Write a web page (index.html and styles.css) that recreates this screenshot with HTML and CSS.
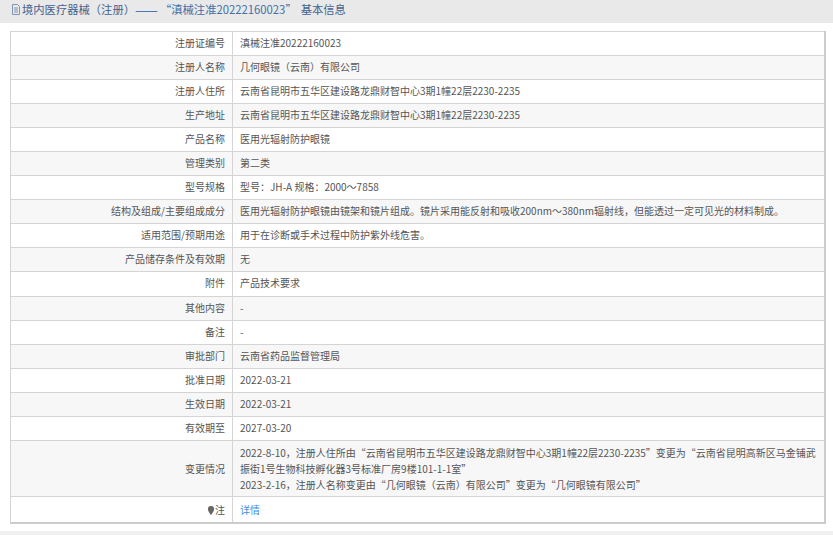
FILE: index.html
```html
<!DOCTYPE html>
<html lang="zh">
<head>
<meta charset="utf-8">
<title>基本信息</title>
<link rel="stylesheet" href="styles.css">
</head>
<body>
<header class="head">
  <svg class="doc" width="10" height="11" viewBox="0 0 10 11"><path d="M1.500.5h5l2 2v8h-7zM3 4h4M3 6h4M3 8h4" fill="none" stroke="#7f95b5"/></svg>
  <span>境内医疗器械（注册）</span>
  <span class="dash">——</span>
  <span class="num">“滇械注准20222160023”</span>
  <span>基本信息</span>
</header>
<main class="wrap">
<table class="info">
  <tr><th>注册证编号</th><td>滇械注准20222160023</td></tr>
  <tr class="alt"><th>注册人名称</th><td>几何眼镜（云南）有限公司</td></tr>
  <tr><th>注册人住所</th><td>云南省昆明市五华区建设路龙鼎财智中心3期1幢22层2230-2235</td></tr>
  <tr class="alt"><th>生产地址</th><td>云南省昆明市五华区建设路龙鼎财智中心3期1幢22层2230-2235</td></tr>
  <tr><th>产品名称</th><td>医用光辐射防护眼镜</td></tr>
  <tr class="alt"><th>管理类别</th><td>第二类</td></tr>
  <tr><th>型号规格</th><td>型号：JH-A 规格：2000～7858</td></tr>
  <tr class="alt"><th>结构及组成/主要组成成分</th><td>医用光辐射防护眼镜由镜架和镜片组成。镜片采用能反射和吸收200nm～380nm辐射线，但能透过一定可见光的材料制成。</td></tr>
  <tr><th>适用范围/预期用途</th><td>用于在诊断或手术过程中防护紫外线危害。</td></tr>
  <tr class="alt"><th>产品储存条件及有效期</th><td>无</td></tr>
  <tr class="tall"><th>附件</th><td>产品技术要求</td></tr>
  <tr class="alt"><th>其他内容</th><td>-</td></tr>
  <tr><th>备注</th><td>-</td></tr>
  <tr class="alt"><th>审批部门</th><td>云南省药品监督管理局</td></tr>
  <tr><th>批准日期</th><td>2022-03-21</td></tr>
  <tr class="alt"><th>生效日期</th><td>2022-03-21</td></tr>
  <tr><th>有效期至</th><td>2027-03-20</td></tr>
  <tr class="alt multi"><th>变更情况</th><td>2022-8-10，注册人住所由“云南省昆明市五华区建设路龙鼎财智中心3期1幢22层2230-2235”变更为“云南省昆明高新区马金铺武振街1号生物科技孵化器3号标准厂房9楼101-1-1室”<br>2023-2-16，注册人名称变更由“几何眼镜（云南）有限公司”变更为“几何眼镜有限公司”</td></tr>
  <tr class="last"><th><svg class="pin" width="6" height="9" viewBox="0 0 6 9"><path d="M3 0a3 3 0 0 1 3 3.200C6 5.500 3 9 3 9S0 5.500 0 3.200A3 3 0 0 1 3 0z" fill="#666"/></svg>注</th><td><a class="link" href="#">详情</a></td></tr>
</table>
</main>
<div class="foot"></div>
</body>
</html>
```

FILE: styles.css
```css
html, body { margin: 0; padding: 0; background: #fff; }
body {
  width: 833px;
  height: 536px;
  overflow: hidden;
  font-family: "Noto Sans CJK SC", "Noto Sans", sans-serif;
  font-size: 10px;
  color: #555;
}
.head {
  display: flex;
  align-items: center;
  box-sizing: border-box;
  height: 23px;
  padding: 0 0 5px 11px;
  background: #e9e9e9;
  font-size: 11.300px;
  color: #41628f;
}
.doc { margin-right: 1px; }
.dash { margin-left: 0; font-size: 13.700px; color: #2a5ca8; }
.num { color: #3d6fa8; margin: 0 4px 0 2px; }
.wrap { padding: 8px 7px 0 10px; }
.info {
  width: 816px;
  border-collapse: collapse;
  table-layout: fixed;
  border: 1px solid #ccc;
  border-bottom-width: 2px;
  border-right-width: 2px;
}
.info th, .info td {
  height: 21px;
  padding: 0 7px 2px;
  border: 1px solid #d4d4d4;
  font-weight: normal;
  line-height: 16px;
}
.info th { width: 207px; text-align: right; }
.alt { background: #f7f7f7; }
.info .tall th, .info .tall td { height: 22px; }
.info .multi th, .info .multi td { height: 54px; padding: 1px 7px 0; }
.info .last th, .info .last td { height: 25px; padding-bottom: 0; }
.pin { margin-right: 1px; vertical-align: -1px; }
.link { color: #3a8ee6; text-decoration: none; }
.foot { height: 4px; margin-top: 7px; background: #f0f0f0; }
```
